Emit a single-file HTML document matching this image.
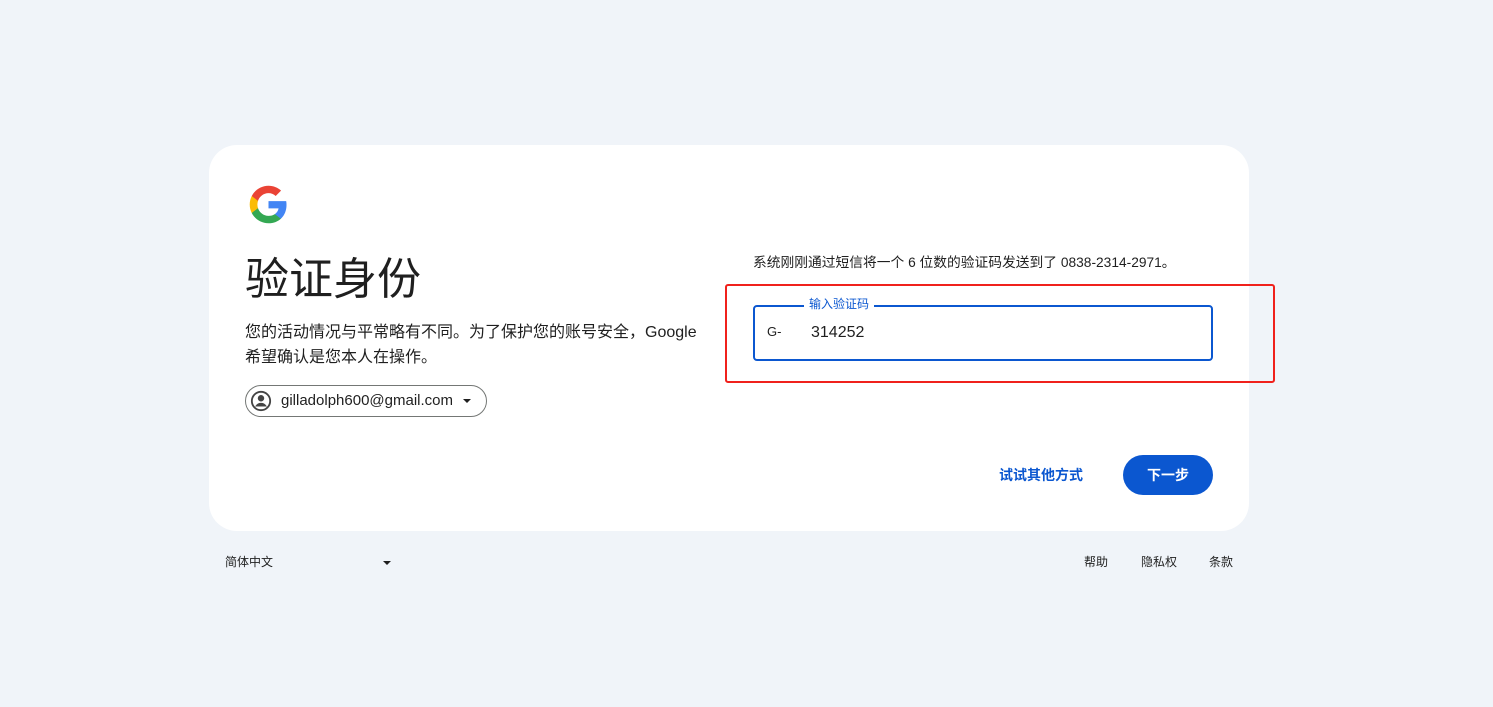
<!DOCTYPE html>
<html><head><meta charset="utf-8"><style>
body{margin:0;width:1493px;height:707px;background:#f0f4f9;font-family:"Liberation Sans","Noto Sans CJK SC",sans-serif;position:relative;overflow:hidden;color:#1f1f1f}
.card{position:absolute;left:209px;top:145px;width:1040px;height:386px;background:#fff;border-radius:28px}
.a{position:absolute;white-space:nowrap}
</style></head><body>
<div class="card"></div>
<svg class="a" style="left:248px;top:184px" width="41" height="41" viewBox="0 0 48 48">
<path fill="#4285F4" d="M45.1 24.5c0-1.6-.1-3.1-.4-4.5H24v8.5h11.8c-.5 2.8-2.1 5.1-4.4 6.7v5.5h7.1c4.2-3.8 6.6-9.5 6.6-16.2z"/>
<path fill="#34A853" d="M24 46c5.9 0 10.9-2 14.5-5.3l-7.1-5.5c-2 1.3-4.5 2.1-7.4 2.1-5.700 0-10.6-3.9-12.3-9.1H4.4v5.7C8 41.1 15.4 46 24 46z"/>
<path fill="#FBBC05" d="M11.7 28.2c-.4-1.3-.7-2.7-.7-4.2s.3-2.9.7-4.2v-5.7H4.4C2.9 17.1 2 20.4 2 24s.9 6.9 2.4 9.9l7.3-5.7z"/>
<path fill="#EA4335" d="M24 10.7c3.2 0 6.1 1.1 8.4 3.3l6.3-6.3C34.9 4.2 29.900 2 24 2 15.4 2 8 6.9 4.4 14.1l7.3 5.700c1.7-5.2 6.6-9.1 12.3-9.1z"/>
</svg>
<div class="a" style="left:245px;top:252px;font-size:44px;line-height:56px">验证身份</div>
<div class="a" style="left:245px;top:320px;font-size:16px;line-height:25px">您的活动情况与平常略有不同。为了保护您的账号安全，Google<br>希望确认是您本人在操作。</div>
<div class="a" style="left:245px;top:385px;width:240px;height:30px;border:1px solid #747775;border-radius:16px"></div>
<svg class="a" style="left:250px;top:390px" width="22" height="22" viewBox="0 0 24 24"><circle cx="12" cy="12" r="10" fill="none" stroke="#444" stroke-width="2"/><circle cx="12" cy="9" r="3.5" fill="#444"/><path d="M5.5 18c2-3 4-4 6.5-4s4.5 1 6.5 4" fill="#444"/></svg>
<div class="a" style="left:281px;top:391px;font-size:15px;line-height:19px">gilladolph600@gmail.com</div>
<div class="a" style="left:463px;top:399px;width:0;height:0;border-left:4px solid transparent;border-right:4px solid transparent;border-top:4px solid #1f1f1f"></div>
<div class="a" style="left:753px;top:254px;font-size:13.75px;line-height:18px">系统刚刚通过短信将一个 6 位数的验证码发送到了 0838-2314-2971。</div>
<div class="a" style="left:725px;top:284px;width:546px;height:95px;border:2px solid #f0211c;border-radius:3px"></div>
<div class="a" style="left:753px;top:305px;width:456px;height:52px;border:2px solid #0b57d0;border-radius:4px"></div>
<div class="a" style="left:804px;top:296px;padding:0 5px;background:#fff;color:#0b57d0;font-size:12px;line-height:16px">输入验证码</div>
<div class="a" style="left:767px;top:324px;font-size:13px;line-height:16px">G-</div>
<div class="a" style="left:811px;top:323px;font-size:16px;line-height:20px">314252</div>
<div class="a" style="left:999px;top:466px;color:#0b57d0;font-size:14px;font-weight:bold;line-height:18px">试试其他方式</div>
<div class="a" style="left:1123px;top:455px;width:90px;height:40px;border-radius:20px;background:#0b57d0;color:#fff;font-size:14px;font-weight:bold;line-height:40px;text-align:center">下一步</div>
<div class="a" style="left:225px;top:554px;font-size:12px;line-height:16px">简体中文</div>
<div class="a" style="left:383px;top:561px;width:0;height:0;border-left:4px solid transparent;border-right:4px solid transparent;border-top:4px solid #1f1f1f"></div>
<div class="a" style="left:1084px;top:554px;font-size:12px;line-height:16px">帮助</div>
<div class="a" style="left:1141px;top:554px;font-size:12px;line-height:16px">隐私权</div>
<div class="a" style="left:1209px;top:554px;font-size:12px;line-height:16px">条款</div>
</body></html>
